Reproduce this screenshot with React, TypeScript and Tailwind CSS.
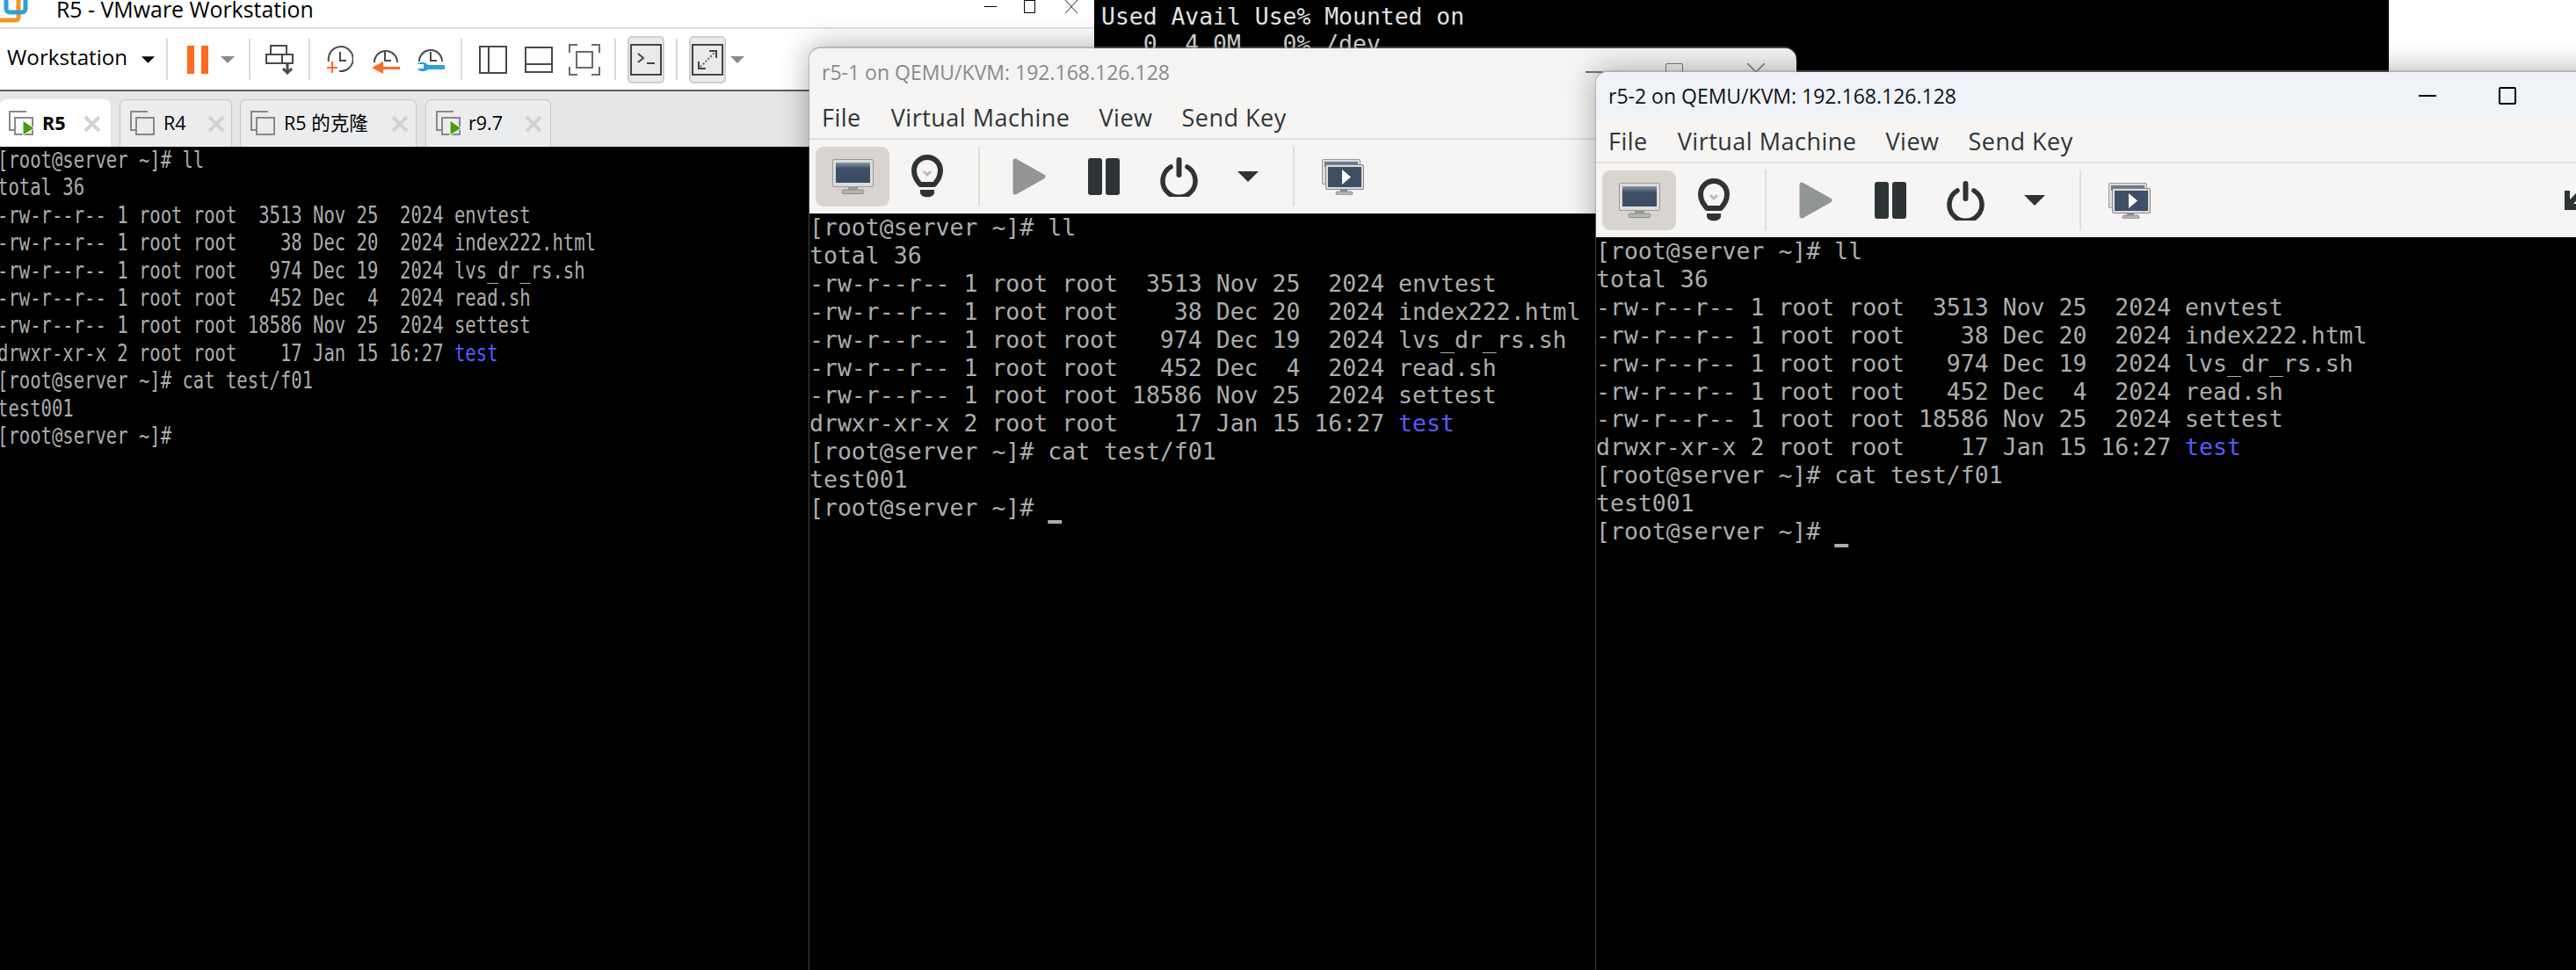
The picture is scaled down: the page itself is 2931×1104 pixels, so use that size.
import React from "react";

const LINES: { t: string; blue?: string }[] = [
  { t: "[root@server ~]# ll" },
  { t: "total 36" },
  { t: "-rw-r--r-- 1 root root  3513 Nov 25  2024 envtest" },
  { t: "-rw-r--r-- 1 root root    38 Dec 20  2024 index222.html" },
  { t: "-rw-r--r-- 1 root root   974 Dec 19  2024 lvs_dr_rs.sh" },
  { t: "-rw-r--r-- 1 root root   452 Dec  4  2024 read.sh" },
  { t: "-rw-r--r-- 1 root root 18586 Nov 25  2024 settest" },
  { t: "drwxr-xr-x 2 root root    17 Jan 15 16:27 ", blue: "test" },
  { t: "[root@server ~]# cat test/f01" },
  { t: "test001" },
];

function TermLines({ cursor }: { cursor: boolean }) {
  return (
    <>
      {LINES.map((l, i) => (
        <div key={i}>
          {l.t}
          {l.blue ? <span className="text-[#5a5aff]">{l.blue}</span> : null}
        </div>
      ))}
      <div>
        {"[root@server ~]# "}
        {cursor ? <span className="underline decoration-[4px] underline-offset-[5px]">{" "}</span> : null}
      </div>
    </>
  );
}

function Sep() {
  return <div className="w-[2px] h-[47px] bg-[#d9d9d9] shrink-0" />;
}

function Caret({ color, className }: { color: string; className: string }) {
  return (
    <svg viewBox="0 0 16 8" className={className}>
      <path d="M0 0H16L8 8Z" fill={color} />
    </svg>
  );
}

function TabIcon({ play, className }: { play?: boolean; className: string }) {
  return (
    <svg viewBox="0 0 29 28" className={className} fill="none">
      <path d="M1 15V1H20" stroke="#888" strokeWidth="2" />
      <path d="M1 14V22H6" stroke="#888" strokeWidth="2" />
      <path d="M7 8H27V27H7Z" stroke="#888" strokeWidth="2" />
      {play ? <path d="M16 11L29 20L16 28Z" fill="#4f9a0b" stroke="#fff" strokeWidth="1" /> : null}
    </svg>
  );
}

function TabX({ className }: { className: string }) {
  return (
    <svg viewBox="0 0 18 18" className={className}>
      <path d="M1 1L17 17M17 1L1 17" stroke="#d2d2d2" strokeWidth="4" />
    </svg>
  );
}

function Tab({
  active,
  play,
  w,
  ml,
  iconMl,
  textMl,
  xCls,
  children,
}: {
  active?: boolean;
  play?: boolean;
  w: string;
  ml: string;
  iconMl: string;
  textMl: string;
  xCls: string;
  children: React.ReactNode;
}) {
  return (
    <div
      className={`${w} ${ml} h-[54px] shrink-0 flex items-center rounded-t-[7px] border-x border-t ${
        active ? "bg-white border-white" : "bg-[#ebecee] border-[#c6c6c6]"
      }`}
    >
      <TabIcon play={play} className={`${iconMl} w-[29px] h-[28px] shrink-0 -mt-[1px]`} />
      <span
        className={`${textMl} text-[21.5px] leading-none whitespace-nowrap text-black -mt-[2px] ${active ? "font-bold" : ""}`}
        style={{ fontFamily: '"Open Sans","Noto Sans CJK SC",sans-serif' }}
      >
        {children}
      </span>
      <TabX className={`${xCls} w-[18px] h-[18px] shrink-0`} />
    </div>
  );
}

function VMware() {
  const st = { stroke: "#4a4a4a", strokeWidth: 2, fill: "none" };
  return (
    <div className="absolute left-0 top-0 w-[1245px] h-[1104px] flex flex-col bg-white">
      <div className="h-[33px] shrink-0 flex items-center border-b-2 border-[#e2e2e2] relative overflow-hidden">
        <svg viewBox="0 0 32 26" className="w-[32px] h-[26px] absolute left-0 top-0">
          <rect x="-3" y="-6" width="24" height="29" rx="3" fill="none" stroke="#f7941e" strokeWidth="5" />
          <rect x="7" y="-10" width="22" height="24" rx="4" fill="none" stroke="#2b9fd9" strokeWidth="5" />
        </svg>
        <span
          className="ml-[64px] -mt-[11px] text-[24.9px] leading-none whitespace-nowrap text-black"
          style={{ fontFamily: '"Open Sans",sans-serif' }}
        >
          R5 - VMware Workstation
        </span>
        <div className="ml-auto mr-[18px] flex items-center -mt-[16px]">
          <div className="w-[14px] h-[1px] bg-black" />
          <div className="ml-[31px] w-[13px] h-[15px] border border-black" />
          <svg viewBox="0 0 16 15" className="ml-[33px] w-[16px] h-[15px]">
            <path d="M1 0L15 15M15 0L1 15" stroke="#222" strokeWidth="1" fill="none" />
          </svg>
        </div>
      </div>

      <div className="h-[69px] shrink-0 flex items-center bg-white">
        <span
          className="ml-[8px] -mt-[4px] text-[24.2px] leading-none whitespace-nowrap text-black"
          style={{ fontFamily: '"Open Sans",sans-serif' }}
        >
          Workstation
        </span>
        <Caret color="#000" className="ml-[16px] w-[15px] h-[8px]" />
        <div className="ml-[13px]">
          <Sep />
        </div>
        <div className="ml-[22px] flex gap-[8px]">
          <div className="w-[8px] h-[32px] bg-[#ff6a1f]" />
          <div className="w-[8px] h-[32px] bg-[#ff6a1f]" />
        </div>
        <Caret color="#8a8a8a" className="ml-[14px] w-[16px] h-[8px]" />
        <div className="ml-[16px]">
          <Sep />
        </div>
        <svg viewBox="0 0 32 34" className="ml-[17px] w-[32px] h-[34px]" fill="none">
          <rect x="6" y="1" width="18" height="10" {...st} />
          <rect x="1" y="11" width="18" height="10" {...st} />
          <rect x="19" y="11" width="12" height="10" {...st} />
          <path d="M25 22V32M20 27L25 32L30 27" stroke="#4a4a4a" strokeWidth="3" />
        </svg>
        <div className="ml-[17px]">
          <Sep />
        </div>
        <svg viewBox="0 0 31 32" className="ml-[18px] w-[31px] h-[32px]" fill="none">
          <path d="M3 18A14 14 0 1 1 15 29" {...st} />
          <path d="M16 7V17H23" {...st} />
          <path d="M7 18V31M1 25H13" stroke="#ff6a1f" strokeWidth="2" />
        </svg>
        <svg viewBox="0 0 33 32" className="ml-[20px] w-[33px] h-[32px]" fill="none">
          <path d="M4 19A13 13 0 1 1 30 19" {...st} />
          <path d="M16 7V17H23" {...st} />
          <path d="M33 24H14V18L1 25L14 32V27H33Z" fill="#ff6a1f" />
        </svg>
        <svg viewBox="0 0 32 32" className="ml-[19px] w-[32px] h-[32px]" fill="none">
          <path d="M3 18A13 13 0 1 1 29 18" {...st} />
          <path d="M16 7V17H23" {...st} />
          <path d="M32 22H13C10 18 3 18 1 21H8V26H1C3 30 10 30 13 27H32Z" fill="#2e9fe0" />
        </svg>
        <div className="ml-[18px]">
          <Sep />
        </div>
        <svg viewBox="0 0 32 32" className="ml-[19px] w-[32px] h-[32px]" fill="none">
          <rect x="1" y="1" width="30" height="30" {...st} />
          <path d="M11 1V31" {...st} />
        </svg>
        <svg viewBox="0 0 32 30" className="ml-[20px] w-[32px] h-[30px]" fill="none">
          <rect x="1" y="1" width="30" height="28" {...st} />
          <path d="M1 20H31" {...st} />
        </svg>
        <svg viewBox="0 0 36 36" className="ml-[18px] w-[36px] h-[36px]" fill="none">
          <path d="M1 10V1H10M26 1H35V10M35 26V35H26M10 35H1V26" stroke="#6a6a6a" strokeWidth="2" />
          <rect x="9" y="9" width="18" height="18" stroke="#6a6a6a" strokeWidth="2" />
        </svg>
        <div className="ml-[16px]">
          <Sep />
        </div>
        <div className="ml-[13px] w-[42px] h-[54px] rounded-[5px] bg-[#e9eaec] border-2 border-[#cfcfcf] flex items-center justify-center">
          <svg viewBox="0 0 36 36" className="w-[36px] h-[36px]" fill="none">
            <rect x="1" y="1" width="34" height="34" stroke="#444" strokeWidth="2" />
            <path d="M9 11L15 16L9 21M19 22H28" stroke="#444" strokeWidth="2" />
          </svg>
        </div>
        <div className="ml-[13px]">
          <Sep />
        </div>
        <div className="ml-[13px] w-[42px] h-[54px] rounded-[5px] bg-[#e9eaec] border-2 border-[#cfcfcf] flex items-center justify-center">
          <svg viewBox="0 0 36 36" className="w-[36px] h-[36px]" fill="none">
            <rect x="1" y="1" width="34" height="34" stroke="#444" strokeWidth="2" />
            <path d="M20 8H28V16M8 20V28H16" stroke="#444" strokeWidth="2" />
            <path d="M10 26L26 10" stroke="#666" strokeWidth="2" strokeDasharray="2 2" />
          </svg>
        </div>
        <Caret color="#8a8a8a" className="ml-[5px] w-[16px] h-[8px]" />
      </div>

      <div className="h-[65px] shrink-0 flex items-end border-t-2 border-[#5e5e5e] bg-[#e4e5e7]">
        <Tab active play w="w-[126px]" ml="ml-0" iconMl="ml-[9px]" textMl="ml-[9px]" xCls="ml-[21px]">
          R5
        </Tab>
        <Tab w="w-[128px]" ml="ml-[10px]" iconMl="ml-[11px]" textMl="ml-[9px]" xCls="ml-[25px]">
          R4
        </Tab>
        <Tab w="w-[201px]" ml="ml-[9px]" iconMl="ml-[11px]" textMl="ml-[9px]" xCls="ml-[27px]">
          R5 的克隆
        </Tab>
        <Tab play w="w-[143px]" ml="ml-[10px]" iconMl="ml-[11px]" textMl="ml-[8px]" xCls="ml-[26px]">
          r9.7
        </Tab>
      </div>

      <div
        className="flex-1 bg-black overflow-hidden text-[#adadad] text-[26.5px] leading-[31.4px] whitespace-pre -ml-[3px] origin-top-left scale-x-[0.776]"
        style={{ fontFamily: '"DejaVu Sans Mono",monospace' }}
      >
        <div className="-mt-[1px]">
          <TermLines cursor={false} />
        </div>
      </div>
    </div>
  );
}

function Monitor({ className }: { className: string }) {
  return (
    <svg viewBox="0 0 47 40" className={className}>
      <defs>
        <linearGradient id="scr" x1="0" y1="0" x2="0" y2="1">
          <stop offset="0" stopColor="#8a97a6" />
          <stop offset="0.3" stopColor="#3f5066" />
          <stop offset="1" stopColor="#3b4c62" />
        </linearGradient>
      </defs>
      <rect x="0.5" y="0.5" width="46" height="31" rx="1.5" fill="#dcdcdc" stroke="#9a9a9a" />
      <rect x="4" y="4" width="39" height="23" fill="url(#scr)" />
      <rect x="18" y="32" width="11" height="3" fill="#999" />
      <rect x="11" y="35" width="25" height="4.5" rx="2" fill="#b5b5b5" stroke="#8c8c8c" />
    </svg>
  );
}

function MultiMonitor({ className }: { className: string }) {
  return (
    <svg viewBox="0 0 48 41" className={className}>
      <rect x="0.5" y="0.5" width="43" height="28" rx="1.5" fill="#dcdcdc" stroke="#999" />
      <rect x="3" y="3" width="38" height="6" fill="#6c7a8c" />
      <rect x="4.5" y="6.5" width="43" height="28" rx="1.5" fill="#dcdcdc" stroke="#888" />
      <rect x="7" y="9" width="38" height="23" fill="#3f5066" />
      <path d="M23 12L33 20.5L23 29Z" fill="#fff" />
      <rect x="21" y="35" width="8" height="2.5" fill="#888" />
      <rect x="16" y="37" width="19" height="4" rx="2" fill="#b5b5b5" stroke="#8c8c8c" />
    </svg>
  );
}

function Window({
  active,
  title,
  left,
  top,
  width,
  height,
  cursor,
}: {
  active: boolean;
  title: string;
  left: string;
  top: string;
  width: string;
  height: string;
  cursor: boolean;
}) {
  const sys = active ? "#000" : "#777";
  const sans = { fontFamily: '"Open Sans",sans-serif' };
  return (
    <div
      className={`absolute ${left} ${top} ${width} ${height} flex flex-col rounded-t-[14px] border-t-2 border-l border-[#7d7d7d8c] bg-clip-padding shadow-[0_0_34px_rgba(0,0,0,0.32)]`}
    >
      <div
        className={`h-[55px] shrink-0 flex items-center rounded-t-[13px] ${
          active ? "bg-[#eff3f8]" : "bg-[#f4f4f4]"
        }`}
      >
        <span
          className={`ml-[14px] text-[23px] leading-none whitespace-nowrap ${
            active ? "text-[#111]" : "text-[#8a8a8a]"
          }`}
          style={sans}
        >
          {title}
        </span>
        <div className="ml-auto mr-[36px] flex items-center -mt-[2px]">
          <div className="w-[20px] h-[2px]" style={{ backgroundColor: sys }} />
          <div
            className={`ml-[71px] w-[20px] h-[20px] rounded-[2px] ${active ? "border-2" : "border"}`}
            style={{ borderColor: sys }}
          />
          <svg viewBox="0 0 20 20" className="ml-[73px] w-[20px] h-[20px]">
            <path d="M0 0L20 20M20 0L0 20" stroke={sys} strokeWidth="1.5" fill="none" />
          </svg>
        </div>
      </div>

      <div
        className="h-[49px] shrink-0 flex items-center bg-[#f6f5f4] border-b-2 border-[#e0dedb] text-[#2e3436] text-[27px] tracking-[0.5px] leading-none"
        style={sans}
      >
        <span className="ml-[14px]">File</span>
        <span className="ml-[34px]">Virtual Machine</span>
        <span className="ml-[33px]">View</span>
        <span className="ml-[33px]">Send Key</span>
      </div>

      <div className="h-[84px] shrink-0 flex items-center bg-[#f6f5f4]">
        <div className="ml-[7px] w-[84px] h-[68px] rounded-[9px] bg-[#d8d4d0] flex items-center justify-center">
          <Monitor className="w-[47px] h-[40px]" />
        </div>
        <svg viewBox="0 0 36 50" className="ml-[25px] w-[36px] h-[50px]" fill="none">
          <path
            d="M10 34C6 29 3 25 3 18A15 15 0 0 1 33 18C33 25 30 29 26 34Z"
            stroke="#2e3436"
            strokeWidth="6"
            strokeLinejoin="round"
          />
          <path d="M10 40H26V43C26 50 10 50 10 43Z" fill="#2e3436" />
          <path d="M14 19L18 23L22 19" stroke="#bbb" strokeWidth="3" />
        </svg>
        <div className="ml-[40px] w-[2px] h-[68px] bg-[#e0dedb]" />
        <svg viewBox="0 0 38 42" className="ml-[37px] w-[38px] h-[42px]">
          <path d="M3 3L35 21L3 39Z" fill="#929595" stroke="#929595" strokeWidth="5" strokeLinejoin="round" />
        </svg>
        <div className="ml-[48px] flex gap-[4px]">
          <div className="w-[16px] h-[42px] rounded-[3px] bg-[#2e3436]" />
          <div className="w-[16px] h-[42px] rounded-[3px] bg-[#2e3436]" />
        </div>
        <svg viewBox="0 0 43 45" className="ml-[46px] w-[43px] h-[45px]" fill="none">
          <path d="M12 11A18.5 18.5 0 1 0 31 11" stroke="#2e3436" strokeWidth="5.5" strokeLinecap="round" />
          <path d="M21.5 3V20" stroke="#2e3436" strokeWidth="6" strokeLinecap="round" />
        </svg>
        <Caret color="#2e3436" className="ml-[45px] w-[24px] h-[12px]" />
        <div className="ml-[39px] w-[2px] h-[68px] bg-[#e0dedb]" />
        <MultiMonitor className="ml-[31px] w-[48px] h-[41px]" />
        <svg viewBox="0 0 30 22" className="ml-auto mr-[44px] w-[30px] h-[22px]">
          <path d="M0 0H6V10L14 2L18 6L10 15H20V22H0Z" fill="#2e3436" />
        </svg>
      </div>

      <div
        className="flex-1 bg-black overflow-hidden text-[#adadad] text-[26.5px] leading-[31.9px] whitespace-pre"
        style={{ fontFamily: '"DejaVu Sans Mono",monospace' }}
      >
        <TermLines cursor={cursor} />
      </div>
    </div>
  );
}

export default function App() {
  return (
    <div className="relative w-[2931px] h-[1104px] overflow-hidden bg-white">
      <VMware />
      <div
        className="absolute left-[1245px] top-0 w-[1473px] h-[90px] bg-black pl-[8px] pt-[3px] text-[#e4e4e4] text-[26.4px] leading-[31px] whitespace-pre"
        style={{ fontFamily: '"DejaVu Sans Mono",monospace' }}
      >
        <div>Used Avail Use% Mounted on</div>
        <div>{"   0  4.0M   0% /dev"}</div>
      </div>
      <Window
        active={false}
        title="r5-1 on QEMU/KVM: 192.168.126.128"
        left="left-[920px]"
        top="top-[53px]"
        width="w-[1124px]"
        height="h-[1051px]"
        cursor
      />
      <Window
        active
        title="r5-2 on QEMU/KVM: 192.168.126.128"
        left="left-[1815px]"
        top="top-[80px]"
        width="w-[1177px]"
        height="h-[1024px]"
        cursor
      />
    </div>
  );
}
